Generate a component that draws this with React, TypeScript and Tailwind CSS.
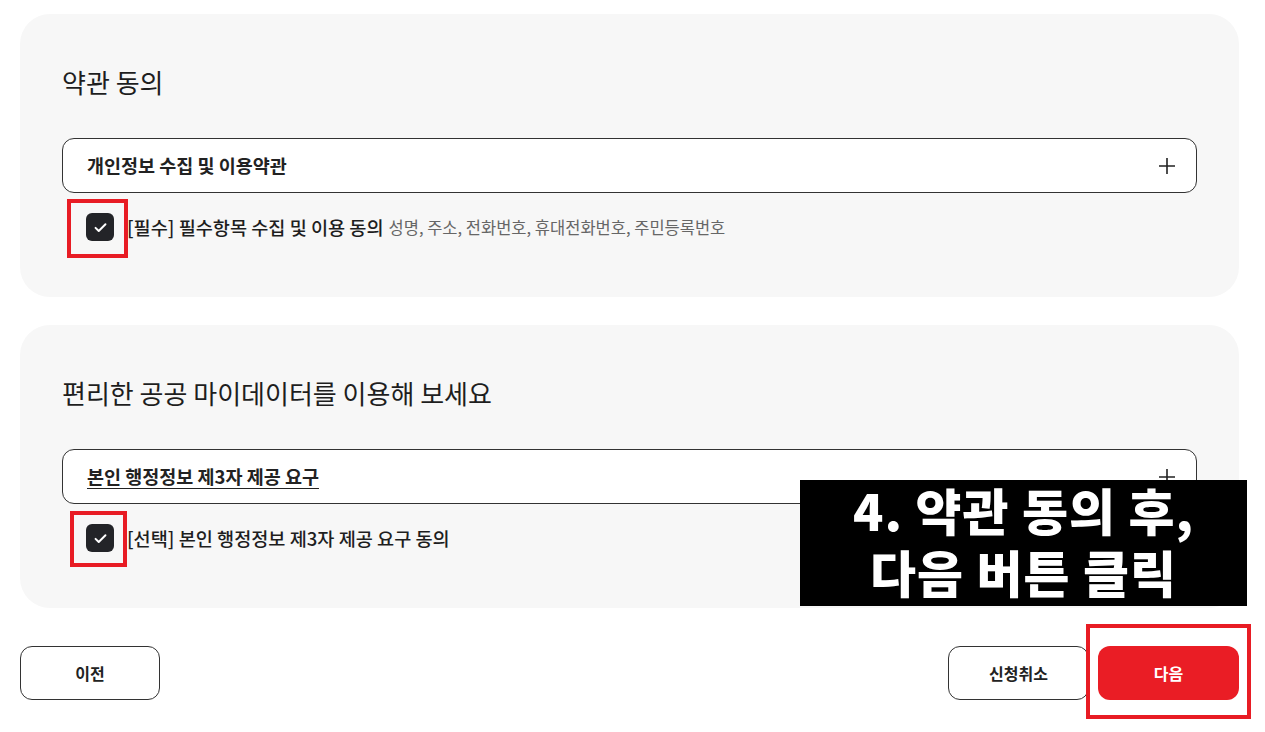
import React from "react";

const font = { fontFamily: '"Noto Sans CJK KR", "Noto Sans", sans-serif' };

const CheckBox = () => (
    <span className="w-[28px] h-[28px] rounded-[6px] bg-[#232428] flex items-center justify-center shrink-0">
        <svg width="17" height="17" viewBox="0 0 24 24" fill="none" stroke="white" strokeWidth="2.8" strokeLinecap="round" strokeLinejoin="round">
            <path d="M5 12.5l4.5 4.5L19 7.5"/>
        </svg>
    </span>
);

const Plus = () => (
    <svg width="18" height="18" viewBox="0 0 18 18" stroke="#222" strokeWidth="1.6">
        <path d="M9 1v16M1 9h16"/>
    </svg>
);

const App = () => {
    const sections = [
        {
            title: '약관 동의',
            item: '개인정보 수집 및 이용약관',
            underline: false,
            label: '[필수] 필수항목 수집 및 이용 동의',
            sub: '성명, 주소, 전화번호, 휴대전화번호, 주민등록번호',
        },
        {
            title: '편리한 공공 마이데이터를 이용해 보세요',
            item: '본인 행정정보 제3자 제공 요구',
            underline: true,
            label: '[선택] 본인 행정정보 제3자 제공 요구 동의',
            sub: '',
        },
    ];

    return (
        <div className="relative w-[1265px] h-[732px] bg-white overflow-hidden text-[#222]" style={font}>
            <div className="flex flex-col pl-[20px] pt-[14px]">
                {sections.map((s, i) => (
                    <section key={i}
                             className="w-[1219px] h-[283px] rounded-[30px] bg-[#f7f7f7] px-[42px] pt-[50px] mb-[28px]">
                        <h2 className="text-[26px] leading-[36px] font-normal text-[#1e1e1e]">{s.title}</h2>
                        <div className="mt-[38px] h-[55px] rounded-[12px] border border-[#333] bg-white flex items-center justify-between pl-[24px] pr-[20px]">
                            <span className={"text-[18.5px] font-bold " + (s.underline ? "underline underline-offset-4" : "")}>{s.item}</span>
                            <Plus/>
                        </div>
                        <div className="mt-[20px] flex items-center pl-[24px]">
                            <CheckBox/>
                            <span className="ml-[13px] text-[18.6px] font-medium text-[#1e1e1e]">{s.label}</span>
                            {s.sub && <span className="ml-[5px] text-[16.5px] text-[#666]">{s.sub}</span>}
                        </div>
                    </section>
                ))}
            </div>

            <div className="flex items-center justify-between pl-[20px] pr-[26px] mt-[10px]">
                <button className="w-[140px] h-[54px] rounded-[12px] border border-[#333] bg-white text-[16px] font-bold">이전</button>
                <div className="flex gap-[9px]">
                    <button className="w-[141px] h-[54px] rounded-[12px] border border-[#333] bg-white text-[16px] font-bold">신청취소</button>
                    <button className="w-[141px] h-[54px] rounded-[12px] bg-[#ea1d25] text-white text-[16px] font-bold">다음</button>
                </div>
            </div>

            {/* annotation overlays */}
            <div className="absolute left-[67px] top-[199px] w-[61px] h-[59px] border-[4px] border-[#e81c24]"/>
            <div className="absolute left-[70px] top-[511px] w-[57px] h-[56px] border-[4px] border-[#e81c24]"/>
            <div className="absolute left-[1086px] top-[624px] w-[165px] h-[95px] border-[4px] border-[#e81c24]"/>
            <div className="absolute left-[800px] top-[480px] w-[447px] h-[126px] bg-black flex flex-col items-center justify-center pb-[6px] text-white text-[50px] font-black leading-[62px] tracking-[1px]">
                <span>4. 약관 동의 후,</span>
                <span>다음 버튼 클릭</span>
            </div>
        </div>
    );
};

export default App;
